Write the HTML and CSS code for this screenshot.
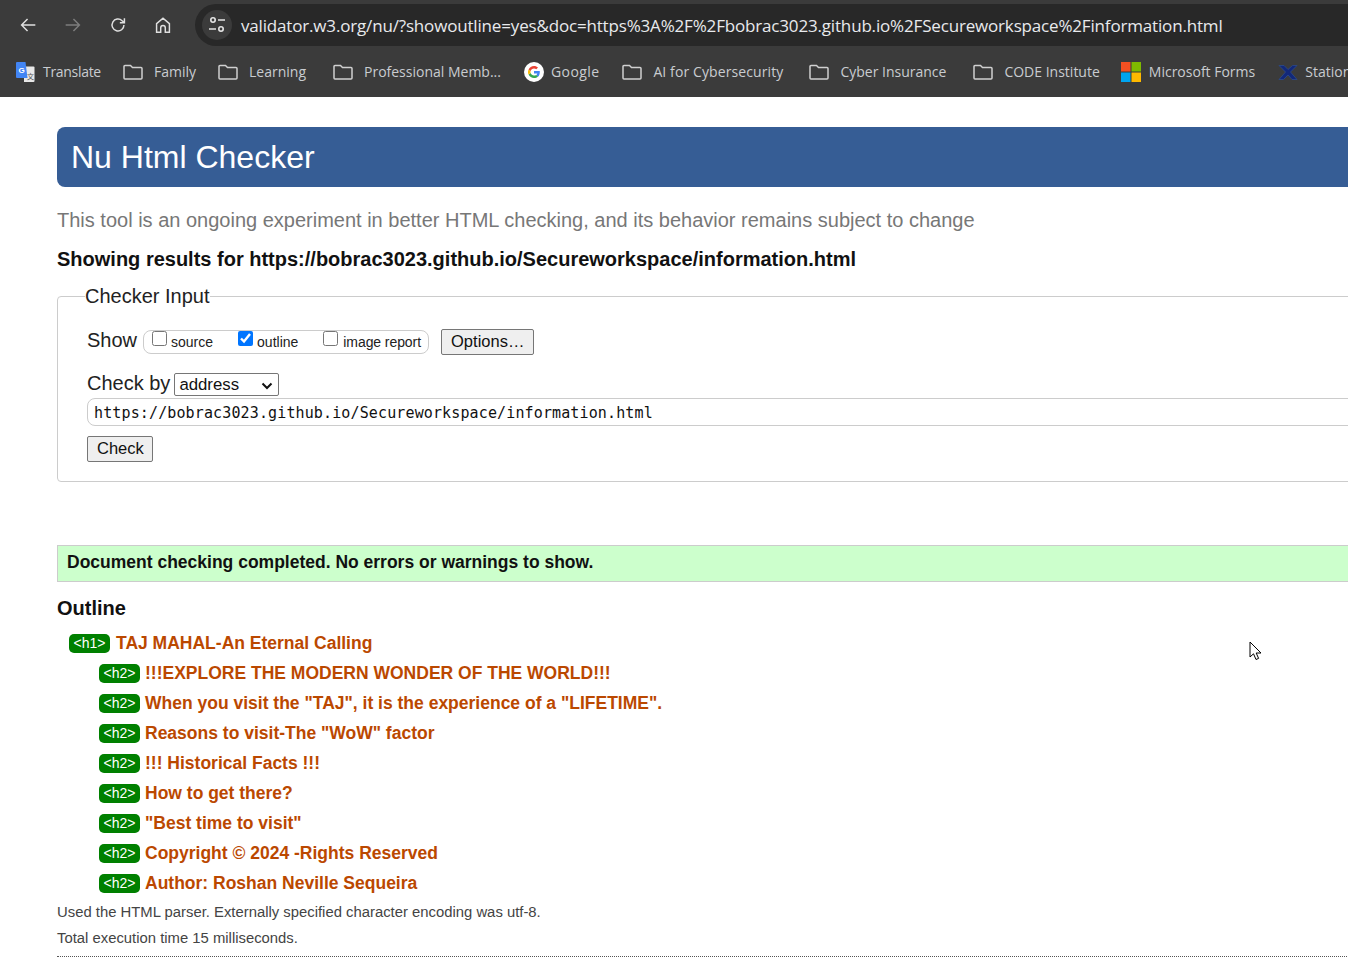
FILE: index.html
```html
<!DOCTYPE html>
<html lang="en">
<head>
    <meta charset="UTF-8">
    <meta name="viewport" content="width=device-width, initial-scale=1.0">
    <title>Nu Html Checker</title>
    <link rel="stylesheet" href="styles.css">
</head>
<body>
    <header class="browser">
        <div class="toolbar">
            <svg class="nav-icon" viewBox="0 0 24 24"><path d="M20 12H5M11.500 5.500 5 12l6.500 6.500"/></svg>
            <svg class="nav-icon nav-off" viewBox="0 0 24 24"><path d="M4 12h15M12.500 5.500 19 12l-6.500 6.500"/></svg>
            <svg class="nav-icon" viewBox="0 0 24 24"><path d="M18.500 12a6.500 6.500 0 1 1-2-4.700L19 9.500M19 4.500v5h-5"/></svg>
            <svg class="nav-icon" viewBox="0 0 24 24"><path d="M5 20V10.500l7-6 7 6V20h-4.500v-5a2.500 2.500 0 0 0-5 0v5z"/></svg>
            <div class="omnibox">
                <span class="site-info">
                    <svg viewBox="0 0 20 20"><circle cx="6" cy="5" r="2.200"/><path d="M11 5h7M2 14h7"/><circle cx="14" cy="14" r="2.200"/></svg>
                </span>
                <span class="url">validator.w3.org/nu/?showoutline=yes&amp;doc=https%3A%2F%2Fbobrac3023.github.io%2FSecureworkspace%2Finformation.html</span>
            </div>
        </div>
        <nav class="bookmarks">
            <a class="mark mark-translate">
                <svg viewBox="0 0 20 20" class="favicon">
                    <path d="M9 4.500h9.500a1 1 0 0 1 1 1V19a1 1 0 0 1-1 1H9z" fill="#e8e8e8"/>
                    <path d="M2 0h8.500l2 16H2a1 1 0 0 1-1-1V1a1 1 0 0 1 1-1z" fill="#4285f4"/>
                    <text x="3.500" y="10.500" class="fav-g">G</text>
                    <text x="12" y="16.500" class="fav-t">文</text>
                </svg>
                Translate
            </a>
            <a class="mark mark-family"><svg class="folder" viewBox="0 0 20 16"><use href="#folder-shape"/></svg>Family</a>
            <a class="mark mark-learning"><svg class="folder" viewBox="0 0 20 16"><use href="#folder-shape"/></svg>Learning</a>
            <a class="mark mark-prof"><svg class="folder" viewBox="0 0 20 16"><use href="#folder-shape"/></svg>Professional Memb...</a>
            <a class="mark mark-google">
                <svg viewBox="0 0 20 20" class="favicon">
                    <circle cx="10" cy="10" r="10" fill="#fff"/>
                    <path d="M15.800 10.200c0-.5 0-.9-.1-1.300H10v2.500h3.300c-.2.800-.6 1.400-1.200 1.800l1.900 1.500c1.200-1 1.800-2.600 1.800-4.500z" fill="#4285f4"/>
                    <path d="M10 16c1.600 0 3-.5 4-1.500l-1.900-1.500c-.5.400-1.200.6-2.100.6-1.600 0-2.900-1-3.400-2.500l-2 1.500C5.600 14.700 7.600 16 10 16z" fill="#34a853"/>
                    <path d="M6.600 11.100c-.2-.7-.2-1.500 0-2.200l-2-1.500c-.8 1.600-.8 3.600 0 5.200z" fill="#fbbc05"/>
                    <path d="M10 6.400c.9 0 1.700.3 2.300.9l1.700-1.700C13 4.600 11.600 4 10 4 7.600 4 5.600 5.300 4.600 7.400l2 1.500c.5-1.500 1.800-2.500 3.400-2.500z" fill="#ea4335"/>
                </svg>
                Google
            </a>
            <a class="mark mark-ai"><svg class="folder" viewBox="0 0 20 16"><use href="#folder-shape"/></svg>AI for Cybersecurity</a>
            <a class="mark mark-cyber"><svg class="folder" viewBox="0 0 20 16"><use href="#folder-shape"/></svg>Cyber Insurance</a>
            <a class="mark mark-code"><svg class="folder" viewBox="0 0 20 16"><use href="#folder-shape"/></svg>CODE Institute</a>
            <a class="mark mark-forms">
                <svg viewBox="0 0 20 20" class="favicon">
                    <rect width="9.500" height="9.500" fill="#f25022"/>
                    <rect x="10.500" width="9.500" height="9.500" fill="#7fba00"/>
                    <rect y="10.500" width="9.500" height="9.500" fill="#00a4ef"/>
                    <rect x="10.500" y="10.500" width="9.500" height="9.500" fill="#ffb900"/>
                </svg>
                Microsoft Forms
            </a>
            <a class="mark mark-station">
                <svg viewBox="0 0 20 20" class="favicon"><path d="M1 3.500h5l4 4 4.500-4H19l-6.500 6.500 6.500 7.500h-5l-4-4.500-4.500 4.500H1l6.500-7.500z" fill="#12287a" stroke="#2c4a8c" stroke-width=".8"/></svg>
                Station
            </a>
        </nav>
    </header>

    <svg class="defs" width="0" height="0">
        <defs>
            <path id="folder-shape" d="M2 1.500h5.500l2 2H18a1 1 0 0 1 1 1V14a1 1 0 0 1-1 1H2a1 1 0 0 1-1-1V2.500a1 1 0 0 1 1-1z"/>
        </defs>
    </svg>

    <main class="page">
        <h1 class="banner">Nu Html Checker</h1>
        <p class="notice">This tool is an ongoing experiment in better HTML checking, and its behavior remains subject to change</p>
        <p class="results-for">Showing results for https://bobrac3023.github.io/Secureworkspace/information.html</p>

        <fieldset class="checker">
            <legend>Checker Input</legend>
            <div class="show-row">
                <span class="row-label">Show</span>
                <div class="show-group">
                    <label class="opt opt-source"><input type="checkbox">source</label>
                    <label class="opt opt-outline"><input type="checkbox" checked>outline</label>
                    <label class="opt opt-image"><input type="checkbox">image report</label>
                </div>
                <button class="btn btn-options" type="button">Options…</button>
            </div>
            <div class="check-row">
                <span class="row-label">Check by</span>
                <select class="check-select"><option>address</option></select>
            </div>
            <input class="doc-url" type="text" value="https://bobrac3023.github.io/Secureworkspace/information.html">
            <button class="btn btn-check" type="button">Check</button>
        </fieldset>

        <p class="success">Document checking completed. No errors or warnings to show.</p>

        <h2 class="outline-title">Outline</h2>
        <ul class="outline">
            <li class="h1-row"><span class="tag">&lt;h1&gt;</span>TAJ MAHAL-An Eternal Calling</li>
            <li><span class="tag">&lt;h2&gt;</span>!!!EXPLORE THE MODERN WONDER OF THE WORLD!!!</li>
            <li><span class="tag">&lt;h2&gt;</span>When you visit the "TAJ", it is the experience of a "LIFETIME".</li>
            <li><span class="tag">&lt;h2&gt;</span>Reasons to visit-The "WoW" factor</li>
            <li><span class="tag">&lt;h2&gt;</span>!!! Historical Facts !!!</li>
            <li><span class="tag">&lt;h2&gt;</span>How to get there?</li>
            <li><span class="tag">&lt;h2&gt;</span>"Best time to visit"</li>
            <li><span class="tag">&lt;h2&gt;</span>Copyright © 2024 -Rights Reserved</li>
            <li><span class="tag">&lt;h2&gt;</span>Author: Roshan Neville Sequeira</li>
        </ul>
        <div class="stats-block">
            <p class="stats">Used the HTML parser. Externally specified character encoding was utf-8.</p>
            <p class="stats">Total execution time 15 milliseconds.</p>
        </div>
        <hr class="rule">
    </main>

    <svg class="cursor" viewBox="0 0 14 20" width="14" height="20"><path d="M1 1v15l3.500-3.200 2.500 5.700 2.600-1.100-2.400-5.400H12z" fill="#fff" stroke="#000"/></svg>
</body>
</html>
```

FILE: styles.css
```css
html, body {
    margin: 0;
    padding: 0;
    height: 969px;
    overflow: hidden;
}
body {
    font-family: "Liberation Sans", Arial, sans-serif;
    background: #fff;
    color: #111;
    position: relative;
}

/* browser chrome */
.browser {
    background: #3b3b3b;
    height: 97px;
    overflow: hidden;
}
.toolbar {
    display: flex;
    align-items: center;
    height: 46px;
    padding: 4px 0 0 17px;
    box-sizing: border-box;
}
.nav-icon {
    width: 22px;
    height: 22px;
    margin-right: 23px;
    flex: none;
    fill: none;
    stroke: #dfdfdf;
    stroke-width: 1.600;
}
.nav-off {
    stroke: #7d7d7d;
}
.omnibox {
    display: flex;
    align-items: center;
    flex: none;
    width: 1200px;
    height: 42px;
    margin-left: -2px;
    border-radius: 21px;
    background: #282828;
    padding-left: 7px;
}
.site-info {
    display: flex;
    align-items: center;
    justify-content: center;
    width: 30px;
    height: 30px;
    border-radius: 50%;
    background: #3b3b3b;
    margin-right: 9px;
}
.site-info svg {
    width: 20px;
    height: 20px;
    fill: none;
    stroke: #e6e6e6;
    stroke-width: 1.600;
}
.url {
    font-family: "Open Sans", sans-serif;
    font-size: 17px;
    color: #e8eaed;
    white-space: nowrap;
    letter-spacing: -0.17px;
}
.bookmarks {
    display: flex;
    align-items: center;
    height: 51px;
    padding: 0 0 0 15px;
    white-space: nowrap;
}
.mark {
    display: flex;
    align-items: center;
    flex: none;
    font-family: "Open Sans", sans-serif;
    font-size: 14px;
    color: #c9ccd0;
}
.favicon {
    width: 20px;
    height: 20px;
    margin-right: 7px;
    flex: none;
}
.folder {
    width: 20px;
    height: 16px;
    margin-right: 11px;
    flex: none;
    fill: none;
    stroke: #d0d0d0;
    stroke-width: 1.500;
}
.fav-g {
    font-size: 8px;
    font-weight: bold;
    fill: #fff;
    font-family: "Liberation Sans", sans-serif;
}
.fav-t {
    font-size: 7px;
    fill: #555;
    font-family: "Noto Sans CJK SC", sans-serif;
}
.mark-translate { letter-spacing: -0.3px; }
.mark-translate .favicon { margin-right: 8px; }
.mark-family { margin-left: 22px; }
.mark-learning { margin-left: 22px; }
.mark-prof { margin-left: 27px; }
.mark-google { margin-left: 23px; letter-spacing: 0.4px; }
.mark-ai { margin-left: 23px; letter-spacing: 0.1px; }
.mark-cyber { margin-left: 26px; }
.mark-code { margin-left: 27px; }
.mark-forms { margin-left: 21px; }
.mark-forms .favicon { margin-right: 8px; }
.mark-station { margin-left: 23px; }
.defs {
    position: absolute;
}

/* checker page */
.page {
    width: 1400px;
    margin-left: 57px;
    padding-top: 30px;
}
.banner {
    margin: 0;
    height: 60px;
    line-height: 60px;
    padding-left: 14px;
    background: #365d95;
    color: #fff;
    font-size: 32px;
    font-weight: normal;
    border-radius: 8px;
}
.notice {
    margin: 21px 0 0;
    font-size: 20px;
    line-height: 24px;
    color: #777;
}
.results-for {
    margin: 15px 0 0;
    font-size: 20px;
    line-height: 24px;
    font-weight: bold;
}
.checker {
    margin: 13px 0 0;
    padding: 17px 29px 19px;
    border: 1px solid #ccc;
    border-radius: 4px;
    min-width: 0;
}
.checker legend {
    margin-left: -2px;
    padding: 0;
    font-size: 20px;
    line-height: 24px;
    color: #222;
}
.show-row {
    display: flex;
    align-items: center;
}
.row-label {
    font-size: 20px;
    line-height: 24px;
    color: #222;
}
.show-group {
    display: flex;
    height: 24px;
    width: 286px;
    margin-left: 6px;
    border: 1px solid #ccc;
    border-radius: 8px;
    box-sizing: border-box;
    margin-top: 3px;
}
.opt {
    display: flex;
    align-items: center;
    padding-top: 1px;
    font-size: 14px;
    color: #222;
    white-space: nowrap;
}
.opt input {
    width: 15px;
    height: 15px;
    margin: -7px 4px 0 0;
}
.opt-source { margin-left: 8px; }
.opt-outline { margin-left: 25px; }
.opt-image { margin-left: 25px; letter-spacing: -0.08px; }
.opt-image input { margin-right: 5px; }
.btn {
    font-family: "Liberation Sans", sans-serif;
    font-size: 16.5px;
    color: #111;
    background: #efefef;
    border: 1px solid #767676;
    border-radius: 2px;
    padding: 0 9px 2px;
    height: 26px;
}
.btn-options {
    margin-left: 12px;
    margin-top: 4px;
}
.check-row {
    display: flex;
    align-items: center;
    margin-top: 16px;
}
.check-row .row-label {
    margin-bottom: 2px;
}
.check-select {
    appearance: none;
    margin-left: 4px;
    width: 105px;
    height: 23px;
    padding: 0 0 0 4px;
    font-family: "Liberation Sans", sans-serif;
    font-size: 16.8px;
    color: #111;
    border: 1px solid #767676;
    border-radius: 2px;
    background: #fff url("data:image/svg+xml,%3Csvg xmlns='http://www.w3.org/2000/svg' width='12' height='8'%3E%3Cpath d='M1.500 1.500 6 6l4.500-4.500' fill='none' stroke='%23111' stroke-width='2'/%3E%3C/svg%3E") no-repeat 86px 8px;
}
.doc-url {
    display: block;
    width: 100%;
    height: 28px;
    margin-top: 1px;
    padding: 2px 6px 0;
    box-sizing: border-box;
    font-family: "DejaVu Sans Mono", monospace;
    font-size: 15px;
    letter-spacing: 0.13px;
    color: #111;
    border: 1px solid #ccc;
    border-radius: 8px;
}
.btn-check {
    display: block;
    width: 66px;
    margin-top: 10px;
}
.success {
    margin: 63px 0 0;
    height: 37px;
    line-height: 33px;
    padding-left: 9px;
    box-sizing: border-box;
    background: #ccffcc;
    border: 1px solid #ccc;
    font-size: 17.5px;
    font-weight: bold;
}
.outline-title {
    margin: 13px 0 0;
    font-size: 20px;
    line-height: 26px;
    font-weight: bold;
}
.outline {
    list-style: none;
    margin: 7px 0 0;
    padding: 0 0 0 42px;
}
.outline li {
    height: 30px;
    line-height: 30px;
    font-size: 17.5px;
    font-weight: bold;
    color: #bb4800;
}
.outline .h1-row {
    margin-left: -30px;
}
.tag {
    display: inline-block;
    width: 41px;
    height: 19px;
    line-height: 19px;
    margin-right: 5px;
    border-radius: 5px;
    background: #008000;
    color: #fff;
    font-size: 14px;
    font-weight: normal;
    text-align: center;
    vertical-align: 1px;
}
.h1-row .tag {
    margin-right: 6px;
}
.stats-block {
    padding-top: 1px;
}
.stats {
    margin: 0;
    height: 26px;
    line-height: 26px;
    font-size: 14.85px;
    color: #444;
}
.rule {
    margin: 5px 0 0;
    border: 0;
    border-top: 1px dotted #555;
}
.cursor {
    position: absolute;
    left: 1249px;
    top: 641px;
}
```
